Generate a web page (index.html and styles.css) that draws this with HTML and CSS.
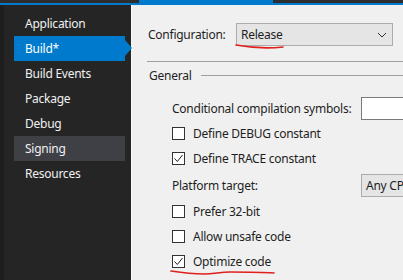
FILE: index.html
```html
<!DOCTYPE html>
<html>
    <head>
        <title>Project properties</title>
        <link rel="stylesheet" href="styles.css">
    </head>
    <body>
        <div class="tabs">
            <div class="tab"></div>
        </div>
        <div class="tabLine"></div>
        <div class="main">
            <div class="side">
                <div class="item">Application</div>
                <div class="item selected">Build*</div>
                <div class="item">Build Events</div>
                <div class="item">Package</div>
                <div class="item">Debug</div>
                <div class="item hover">Signing</div>
                <div class="item">Resources</div>
            </div>
            <div class="content">
                <div class="config">
                    <span class="label">Configuration:</span>
                    <div class="combo wide">
                        <span>Release</span>
                        <svg class="chev" width="10" height="6" viewBox="0 0 10 6"><path d="M1 1 L5 5 L9 1" fill="none" stroke="#333" stroke-width="1"/></svg>
                        <svg class="mark markTop" width="52" height="6" viewBox="0 0 52 6"><path d="M1 1 C12 3, 30 5, 48 3" fill="none" stroke="#e0201c" stroke-width="1.6" stroke-linecap="round"/></svg>
                    </div>
                </div>
                <div class="sep"></div>
                <div class="group">
                    <span>General</span>
                    <div class="groupLine"></div>
                </div>
                <div class="row first">
                    <span class="lbl">Conditional compilation symbols:</span>
                    <div class="textbox"></div>
                </div>
                <div class="row">
                    <span class="box"></span>
                    <span>Define DEBUG constant</span>
                </div>
                <div class="row">
                    <span class="box"><svg width="11" height="11" viewBox="0 0 11 11"><path d="M1.5 5.5 L4.3 8.5 L9.5 2" fill="none" stroke="#222" stroke-width="1"/></svg></span>
                    <span>Define TRACE constant</span>
                </div>
                <div class="row platform">
                    <span class="lbl">Platform target:</span>
                    <div class="combo small">Any CPU</div>
                </div>
                <div class="row">
                    <span class="box"></span>
                    <span>Prefer 32-bit</span>
                </div>
                <div class="row">
                    <span class="box"></span>
                    <span>Allow unsafe code</span>
                </div>
                <div class="row">
                    <span class="box"><svg width="11" height="11" viewBox="0 0 11 11"><path d="M1.5 5.5 L4.3 8.5 L9.5 2" fill="none" stroke="#222" stroke-width="1"/></svg></span>
                    <span>Optimize code</span>
                    <svg class="mark markBottom" width="106" height="8" viewBox="0 0 106 8"><path d="M1 2 C14 4, 24 5, 34 5 C44 5, 50 3, 60 3 C75 3, 90 3, 104 4" fill="none" stroke="#e0201c" stroke-width="1.6" stroke-linecap="round"/></svg>
                </div>
            </div>
        </div>
    </body>
</html>
```

FILE: styles.css
```css
body {
    margin: 0;
    width: 403px;
    height: 280px;
    overflow: hidden;
    background: #2d2d30;
    font-family: "Noto Sans", "Open Sans", sans-serif;
    font-size: 12px;
    letter-spacing: -0.25px;
}
.tabs {
    height: 3px;
    display: flex;
    background: #2d2d30;
}
.tab {
    margin-left: 139px;
    width: 134px;
    background: #007acc;
}
.tabLine {
    height: 2px;
    background: #007acc;
}
.main {
    display: flex;
    height: 275px;
}
.side {
    flex: none;
    width: 126px;
    border-left: 4px solid #1e1e1e;
    background: #252526;
    padding-top: 6px;
    padding-left: 1px;
}
.side .item {
    height: 25px;
    line-height: 26px;
    margin-left: 9px;
    width: 111px;
    padding-left: 11px;
    box-sizing: border-box;
    color: #f1f1f1;
    position: relative;
}
.item.selected {
    background: #007acc;
    color: #fff;
}
.item.selected::after {
    content: "";
    position: absolute;
    right: -7px;
    top: 4px;
    border-left: 7px solid #007acc;
    border-top: 8px solid transparent;
    border-bottom: 8px solid transparent;
}
.item.hover {
    background: #3f3f46;
}
.content {
    flex: 1;
    min-width: 0;
    overflow: hidden;
    background: #f0f0f0;
    border-left: 1px solid #fafafa;
    color: #1e1e1e;
}
.config {
    display: flex;
    align-items: center;
    padding: 18px 10px 0 16px;
    height: 23px;
}
.label {
    width: 88px;
    flex: none;
}
.combo {
    height: 23px;
    box-sizing: border-box;
    border: 1px solid #acacac;
    background: #e5e5e5;
    display: flex;
    align-items: center;
    padding-left: 4px;
    position: relative;
    white-space: nowrap;
}
.combo.wide {
    flex: 1;
}
.chev {
    margin-left: auto;
    margin-right: 5px;
}
.mark {
    position: absolute;
}
.markTop {
    left: -2px;
    top: 20px;
}
.sep {
    height: 1px;
    background: #a0a0a0;
    margin: 15px 0 0 15px;
}
.group {
    display: flex;
    align-items: center;
    height: 26px;
    padding-left: 17px;
}
.groupLine {
    flex: 1;
    height: 1px;
    background: #a0a0a0;
    margin-left: 10px;
}
.row {
    display: flex;
    align-items: center;
    height: 25px;
    padding-left: 40px;
    position: relative;
    white-space: nowrap;
}
.row.first {
    margin-top: 8px;
}
.row.platform {
    height: 28px;
}
.lbl {
    width: 189px;
    flex: none;
}
.textbox {
    width: 60px;
    height: 23px;
    flex: none;
    box-sizing: border-box;
    background: #fff;
    border: 1px solid #7a7a7a;
}
.combo.small {
    width: 60px;
    flex: none;
}
.box {
    width: 13px;
    height: 13px;
    flex: none;
    box-sizing: border-box;
    border: 1px solid #333;
    background: #fff;
    margin-right: 8px;
    display: flex;
    align-items: center;
    justify-content: center;
}
.markBottom {
    left: 38px;
    top: 20px;
}
```
